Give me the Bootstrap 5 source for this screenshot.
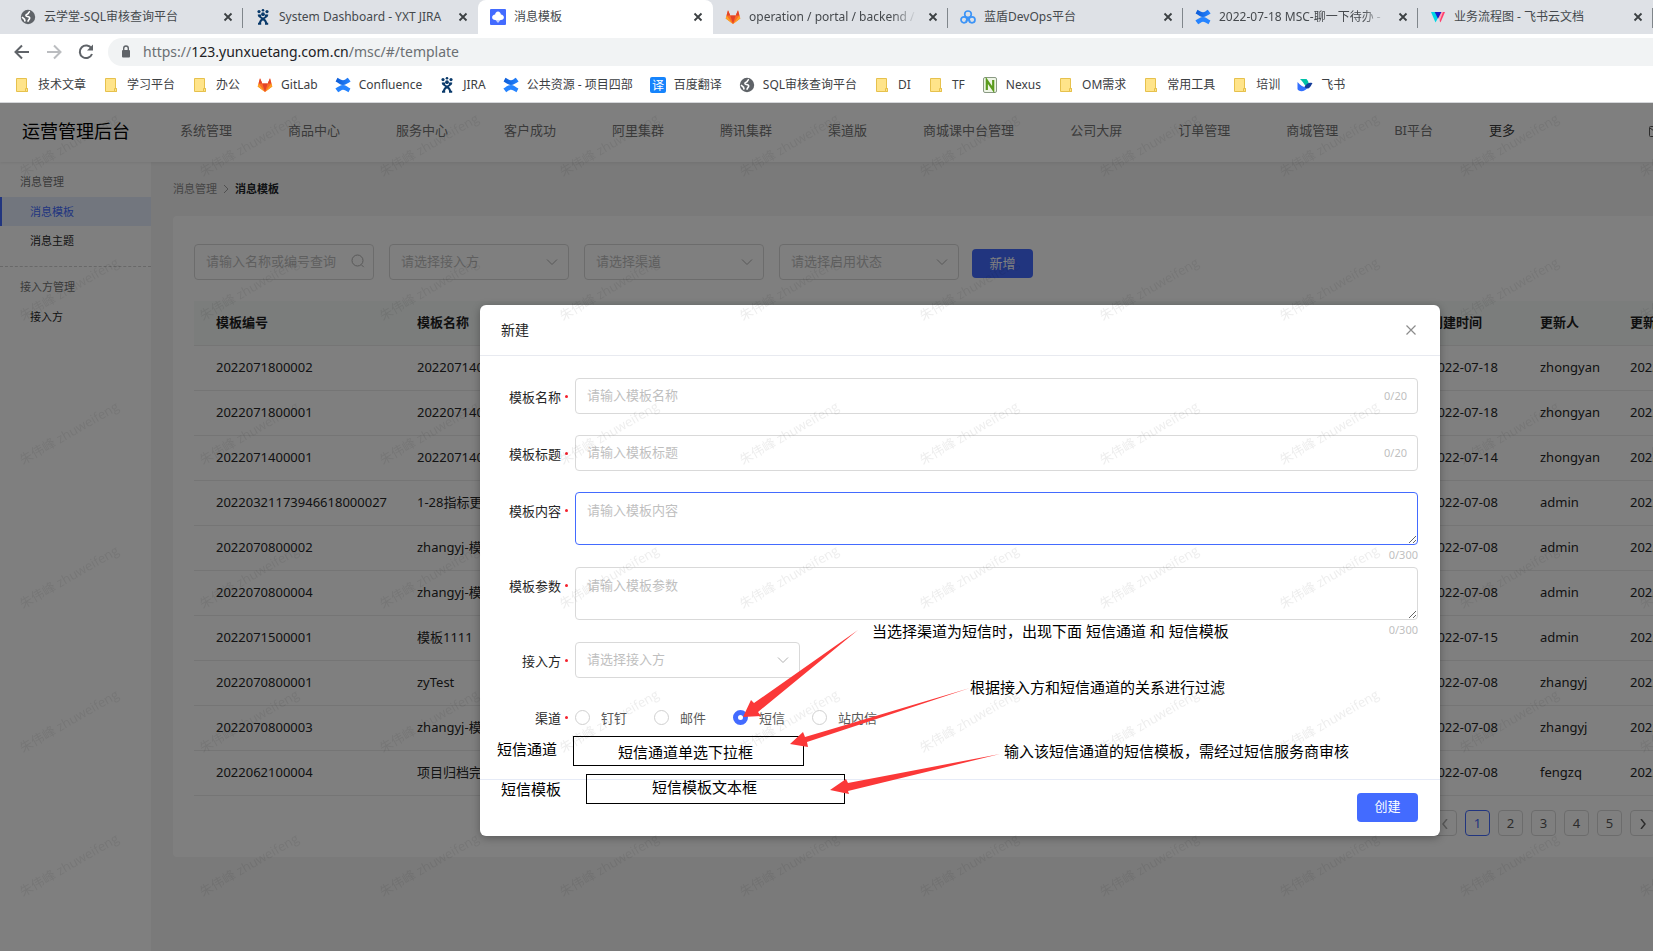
<!DOCTYPE html>
<html lang="zh-CN">
<head>
<meta charset="utf-8">
<meta name="viewport" content="width=device-width, initial-scale=1">
<title>消息模板</title>
<link href="https://cdn.jsdelivr.net/npm/bootstrap@5.3.0/dist/css/bootstrap.min.css" rel="stylesheet">
<style>
  :root { --brand: #436bff; }
  body { font-family: "Noto Sans", "Noto Sans CJK SC", sans-serif; font-size: 13px; line-height: 20px; color: #262626; background: #fff; }
  a { color: inherit; text-decoration: none; }
  button { font-family: inherit; }

  /* browser frame */
  .tab-strip { background: #dee1e6; height: 34px; padding-left: 8px; }
  .tab-item { flex: 0 0 235px; min-width: 0; height: 34px; padding: 0 7px 0 12px; font-size: 12px; color: #45494d; position: relative; }
  .tab-item.divided::after { content: ""; position: absolute; right: 0; top: 8px; height: 20px; width: 1px; background: #80868b; }
  .tab-item.current { background: #fff; border-radius: 8px 8px 0 0; }
  .tab-title { flex: 1; min-width: 0; overflow: hidden; white-space: nowrap; }
  .tab-title.fade-out { -webkit-mask-image: linear-gradient(90deg, #000 85%, transparent); mask-image: linear-gradient(90deg, #000 85%, transparent); }
  .tab-close { width: 16px; height: 16px; flex: none; color: #3c4043; }
  .toolbar { height: 36px; padding: 4px 0 4px 12px; gap: 12px; }
  .tool-btn { width: 20px; height: 20px; flex: none; color: #5f6368; }
  .tool-btn.off { color: #bbbdc0; }
  .omnibox { height: 28px; background: #f1f3f4; border-radius: 14px 0 0 14px; padding-left: 11px; gap: 10px; font-size: 14px; color: #6b6f73; }
  .omnibox b { color: #202124; font-weight: 400; }
  .bookmarks { height: 33px; padding: 0 0 2px 14px; gap: 17px; font-size: 12px; color: #3c4043; border-bottom: 1px solid #d5d7da; white-space: nowrap; }
  .bookmarks a { display: flex; align-items: center; gap: 8px; }
  .ico { width: 16px; height: 16px; flex: none; }

  /* admin application */
  .page-view { overflow: hidden; }
  .admin { min-width: 1920px; background: #fff; }
  .admin-head { height: 59px; padding: 0 257px 3px 22px; box-shadow: 0 1px 3px rgba(0,0,0,.08); position: relative; }
  .admin-title { width: 158px; font-size: 18px; color: #000; }
  .admin-nav { gap: 56px; color: #757575; padding-bottom: 2px; }
  .admin-nav .more { color: #3a3a3a; }
  .admin-side { flex: 0 0 151px; font-size: 11px; }
  .side-group { padding: 10px 0 5px 20px; color: #757575; }
  .side-link { display: block; height: 29px; line-height: 29px; padding-left: 28px; border-left: 2px solid transparent; color: #1f1f1f; }
  .side-link.active { background: #e4edfd; border-color: var(--brand); color: var(--brand); }
  .side-rule { margin: 11px 0 0; border-top: 1px dashed #d0d0d0; }
  .admin-main { background: #f4f4f4; padding: 0 20px 0 22px; }
  .crumbs { height: 54px; font-size: 11px; gap: 5px; color: #8c8c8c; }
  .panel { background: #fff; border-radius: 4px; padding: 28px 20px 21px 21px; }
  .field { font-size: 13px; line-height: 20px; height: 36px; border: 1px solid #d9d9d9; border-radius: 4px; padding: 6px 12px 8px 11px; color: #262626; background-color: #fff; }
  .field::placeholder { color: #bfbfbf; opacity: 1; }
  select.field { appearance: none; color: #bfbfbf; background-image: url("data:image/svg+xml,%3Csvg xmlns='http://www.w3.org/2000/svg' viewBox='0 0 12 12'%3E%3Cpath d='M1 3.5l5 5 5-5' fill='none' stroke='%23b0b0b0'/%3E%3C/svg%3E"); background-repeat: no-repeat; background-position: right 10px center; background-size: 12px; }
  .filters { gap: 15px; }
  .filters .filter { width: 180px; position: relative; }
  .filter svg { position: absolute; right: 9px; top: 10px; width: 14px; height: 14px; color: #b0b0b0; }
  .act { background: var(--brand); color: #fff; border: 0; border-radius: 4px; width: 61px; height: 29px; font-size: 13px; line-height: 20px; padding: 0 0 2px; }
  .act:hover { background: #3258e8; color: #fff; }
  .filters .act { margin: 3px 0 0 -2px; }
  .grid-table { table-layout: fixed; margin: 21px 0 14px; }
  .grid-table th, .grid-table td { height: 45px; padding: 0 0 1px 22px; vertical-align: middle; border-bottom: 1px solid #ebebeb; color: #262626; background: none; white-space: nowrap; overflow: hidden; box-shadow: none; }
  .grid-table th { height: 44px; background: #f6faf9; font-weight: 700; color: #1f1f1f; }
  .pager { gap: 8px; margin: 0 225px 0 0; }
  .pager .page-item .page-link { width: 25px; height: 26px; line-height: 24px; padding: 0; text-align: center; border: 1px solid #d9d9d9; border-radius: 4px; margin: 0; font-size: 13px; color: #595959; background: none; z-index: auto; }
  .pager .page-item.active .page-link { border-color: var(--brand); color: var(--brand); }
  .pager svg { width: 10px; height: 10px; }

  /* dialog */
  .shade { position: absolute; inset: 0; background: rgba(0,0,0,.5); padding-top: 202px; }
  .dialog-box { width: 50%; position: relative; }
  .dialog-box .modal-content { background: #fff; border: 0; border-radius: 6px; box-shadow: 0 2px 8px rgba(0,0,0,.3); color: #262626; }
  .dialog-box .modal-header { height: 51px; padding: 0 22px 0 21px; border-bottom: 1px solid #e8eaf0; }
  .dialog-box .modal-title { font-size: 14px; line-height: 20px; font-weight: 400; }
  .dialog-close { border: 0; background: none; padding: 0; width: 14px; height: 14px; color: #8c8c8c; line-height: 0; }
  .dialog-box .modal-body { padding: 22px 22px 43px 0; }
  .dialog-box .modal-footer { height: 57px; padding: 0 22px 2px; border-top: 1px solid #e6ebf7; }
  .form-line { display: flex; margin-bottom: 21px; }
  .form-line.long { margin-bottom: 22px; }
  .form-name { width: 95px; padding: 9px 14px 0 0; text-align: right; position: relative; flex: none; }
  .form-name::after { content: ""; position: absolute; right: 7px; top: 17px; width: 3px; height: 3px; border-radius: 50%; background: #f5222d; }
  .form-line textarea.field { height: 53px; padding-top: 7px; display: block; resize: vertical; }
  .form-line .party { width: 225px; }
  .field.on { border-color: var(--brand); }
  .tally { position: absolute; right: 11px; top: 8px; color: #bfbfbf; font-size: 11px; }
  .tally.under { right: 0; top: 53px; }
  .channel { width: 79px; gap: 11px; height: 37px; color: #595959; white-space: nowrap; }
  .channel .form-check-input { width: 15px; height: 15px; margin: 0; border: 1px solid #d0d0d0; background: #fff; float: none; flex: none; }
  .channel .form-check-input:checked { border: 5px solid var(--brand); background: #fff; }

  .stamp { position: absolute; inset: 0; width: 100%; height: 100%; pointer-events: none; }

  /* review notes laid over the dialog */
  .notes { position: absolute; inset: 0; font-size: 15px; line-height: 20px; color: #000; pointer-events: none; }
  .notes > * { position: absolute; white-space: nowrap; }
  .note-box { border: 1px solid #000; height: 30px; line-height: 30px; }
  .note-box.first { padding-left: 44px; }
  .note-box.second { line-height: 24px; padding-left: 65px; }
</style>
</head>
<body class="min-vh-100 d-flex flex-column overflow-hidden">
<svg width="0" height="0" class="position-absolute" aria-hidden="true">
  <defs>
    <linearGradient id="cfA" x1="0" x2="1"><stop offset="0" stop-color="#0a5ad6"/><stop offset="1" stop-color="#2684ff"/></linearGradient>
    <symbol id="globe" viewBox="0 0 16 16"><circle cx="8" cy="8" r="7.2" fill="#5f6368"/><path d="M10 2.500C8 3 9 4.700 7 5.300 5.200 5.900 5.800 7.400 7.300 7.500c1.800.1 2.700.8 2.300 2-.3 1.100-1.500 1.400-1.600 3.300M2 8l2.500 2.300.6 2.200" fill="none" stroke="#fff" stroke-width="1.600"/></symbol>
    <symbol id="jira" viewBox="0 0 16 16"><g fill="none" stroke="#0a3a6b" stroke-width="2"><path d="M3.500 5.500c.5 2.500 2 3 4.500 4.300 2 1 3.200 2.300 3.500 5.700M12.500 5.500c-.5 2.500-2 3-4.500 4.300-2 1-3.200 2.300-3.500 5.700M3 6.500h3M10 6.500h3M3 14.800h3.200M10 14.800h3.200"/></g><g fill="#0a3a6b"><circle cx="8" cy="5.200" r="1.900"/><circle cx="4" cy="2.600" r="1.600"/><circle cx="12" cy="2.600" r="1.600"/><circle cx="8" cy="1.300" r="1.300"/></g></symbol>
    <symbol id="gitlab" viewBox="0 0 16 16"><path d="M8 15L.7 9.500 3 1.200 5.300 6.500h5.400L13 1.200l2.300 8.300z" fill="#fc6d26"/><path d="M8 15L5.300 6.500h5.400z" fill="#e24329"/><path d="M8 15L.7 9.500l.9-3zM8 15l7.300-5.500-.9-3z" fill="#fca326"/><path d="M3 1.200l2.300 5.300H1.600zM13 1.200l-2.300 5.300h3.700z" fill="#e24329"/></symbol>
    <symbol id="conf" viewBox="0 0 16 16"><path d="M.6 4.500L2.500.8C5 2 6.300 3.300 8 3.300S11 1.800 12.800.8L15.600 4.500C13 6 10.500 8 8 8S3 5.800.6 4.500z" fill="url(#cfA)"/><path d="M15.400 11.500l-1.900 3.700C11 14 9.700 12.700 8 12.700s-3 1.500-4.800 2.500L.4 11.500C3 10 5.500 8 8 8s5 2.200 7.400 3.500z" fill="#2684ff"/></symbol>
    <symbol id="folder" viewBox="0 0 16 16"><path d="M2.500 1.500h10v10h1v3h-11z" fill="#ffe48a" stroke="#e6c14d"/><path d="M11.500 14.500v-3h2v3z" fill="#ffe48a" stroke="#e6c14d"/></symbol>
    <symbol id="cloud" viewBox="0 0 16 16"><rect width="16" height="16" rx="1" fill="#436bff"/><path d="M8 2.600c1.700 0 2.600 1.400 2.900 2.800 1.700.2 3 1.300 3 2.800 0 1.700-1.300 2.700-3 2.700H5.100c-1.700 0-3-1-3-2.700 0-1.500 1.300-2.600 3-2.800C5.400 4 6.300 2.600 8 2.600z" fill="#fff"/><path d="M5.500 11h5L8 14z" fill="#c6d2ff"/></symbol>
    <symbol id="devops" viewBox="0 0 16 16"><g fill="none" stroke="#3d94f6" stroke-width="1.700"><circle cx="8" cy="5.300" r="3.300"/><circle cx="4" cy="10.800" r="3"/><circle cx="12" cy="10.800" r="3"/><path d="M6.500 8l3.600 4.500M9.500 8l-3.600 4.500"/></g></symbol>
    <symbol id="docs" viewBox="0 0 16 16"><path d="M1 3h7l1 4-3.500 6.500z" fill="#00d6e6"/><path d="M15 3l-4.500 10.500L7 7l1-4z" fill="#ff3f6c"/><path d="M4.700 3h6.800L8 9.800z" fill="#1a1fc8"/><path d="M11.500 3L8 9.800l1.500 2.500L13 3z" fill="#fff" opacity=".55"/></symbol>
    <symbol id="fanyi" viewBox="0 0 16 16"><rect width="16" height="16" rx="2" fill="#1684fc"/><text x="2" y="12.500" font-size="12" fill="#fff" font-family="Noto Sans CJK SC, sans-serif">译</text></symbol>
    <symbol id="nexus" viewBox="0 0 16 16"><rect x="1.500" y=".5" width="13" height="15" rx="1.500" fill="#eef5e6" stroke="#8a9a84"/><path d="M4.800 13V3.300L11.200 12.700V3" fill="none" stroke="#5a9b1e" stroke-width="2.200"/></symbol>
    <symbol id="feishu" viewBox="0 0 16 16"><path d="M3 2h6.500c1.500 1.500 2 3 2.300 5L8.500 9C7 6.500 5 4 3 2z" fill="#00c2a8"/><path d="M.5 5c3 3.500 6 5.800 10 5.500-1.500 2.600-3.700 3.700-6 3.700C2.500 14.200.500 13 .5 12z" fill="#3370ff"/><path d="M7.500 9.800C10 6 12.500 5 15.500 6.200 14 8 13.500 11.500 10 11.500c-1 0-2-.7-2.500-1.700z" fill="#133c9a"/></symbol>
    <symbol id="x" viewBox="0 0 16 16"><path d="M4.500 4.500l7 7M11.500 4.500l-7 7" stroke="currentColor" stroke-width="1.800"/></symbol>
  </defs>
</svg>

<header>
  <nav class="tab-strip d-flex" aria-label="标签页">
    <div class="tab-item divided d-flex align-items-center gap-2"><svg class="ico"><use href="#globe"/></svg><span class="tab-title">云学堂-SQL审核查询平台</span><svg class="tab-close"><use href="#x"/></svg></div>
    <div class="tab-item d-flex align-items-center gap-2"><svg class="ico"><use href="#jira"/></svg><span class="tab-title">System Dashboard - YXT JIRA</span><svg class="tab-close"><use href="#x"/></svg></div>
    <div class="tab-item current d-flex align-items-center gap-2"><svg class="ico"><use href="#cloud"/></svg><span class="tab-title">消息模板</span><svg class="tab-close"><use href="#x"/></svg></div>
    <div class="tab-item divided d-flex align-items-center gap-2"><svg class="ico"><use href="#gitlab"/></svg><span class="tab-title fade-out">operation / portal / backend /</span><svg class="tab-close"><use href="#x"/></svg></div>
    <div class="tab-item divided d-flex align-items-center gap-2"><svg class="ico"><use href="#devops"/></svg><span class="tab-title">蓝盾DevOps平台</span><svg class="tab-close"><use href="#x"/></svg></div>
    <div class="tab-item divided d-flex align-items-center gap-2"><svg class="ico"><use href="#conf"/></svg><span class="tab-title fade-out">2022-07-18 MSC-聊一下待办 -</span><svg class="tab-close"><use href="#x"/></svg></div>
    <div class="tab-item divided d-flex align-items-center gap-2"><svg class="ico"><use href="#docs"/></svg><span class="tab-title">业务流程图 - 飞书云文档</span><svg class="tab-close"><use href="#x"/></svg></div>
  </nav>
  <div class="toolbar d-flex align-items-center">
    <svg class="tool-btn" viewBox="0 0 20 20" fill="none" stroke="currentColor" stroke-width="2"><path d="M17 10H4M10 3.500L3.500 10l6.500 6.500"/></svg>
    <svg class="tool-btn off" viewBox="0 0 20 20" fill="none" stroke="currentColor" stroke-width="2"><path d="M3 10h13M10 3.500l6.500 6.500-6.500 6.500"/></svg>
    <svg class="tool-btn" viewBox="0 0 20 20" fill="none" stroke="currentColor" stroke-width="2"><path d="M15.500 6.500A6.300 6.300 0 1 0 16 12"/><path d="M17 2.500V8.500H11z" fill="currentColor" stroke="none"/></svg>
    <div class="omnibox flex-grow-1 d-flex align-items-center">
      <svg width="14" height="16" viewBox="0 0 14 16"><rect x="3" y="6" width="8" height="7.500" rx="1" fill="#5f6368"/><path d="M4.700 6V4.300a2.300 2.300 0 0 1 4.600 0V6" fill="none" stroke="#5f6368" stroke-width="1.400"/></svg>
      <span>https://<b>123.yunxuetang.com.cn</b>/msc/#/template</span>
    </div>
  </div>
  <nav class="bookmarks d-flex align-items-center" aria-label="书签">
    <a href="#"><svg class="ico"><use href="#folder"/></svg>技术文章</a>
    <a href="#"><svg class="ico"><use href="#folder"/></svg>学习平台</a>
    <a href="#"><svg class="ico"><use href="#folder"/></svg>办公</a>
    <a href="#"><svg class="ico"><use href="#gitlab"/></svg>GitLab</a>
    <a href="#"><svg class="ico"><use href="#conf"/></svg>Confluence</a>
    <a href="#"><svg class="ico"><use href="#jira"/></svg>JIRA</a>
    <a href="#"><svg class="ico"><use href="#conf"/></svg>公共资源 - 项目四部</a>
    <a href="#"><svg class="ico"><use href="#fanyi"/></svg>百度翻译</a>
    <a href="#"><svg class="ico"><use href="#globe"/></svg>SQL审核查询平台</a>
    <a href="#"><svg class="ico"><use href="#folder"/></svg>DI</a>
    <a href="#"><svg class="ico"><use href="#folder"/></svg>TF</a>
    <a href="#"><svg class="ico"><use href="#nexus"/></svg>Nexus</a>
    <a href="#"><svg class="ico"><use href="#folder"/></svg>OM需求</a>
    <a href="#"><svg class="ico"><use href="#folder"/></svg>常用工具</a>
    <a href="#"><svg class="ico"><use href="#folder"/></svg>培训</a>
    <a href="#"><svg class="ico"><use href="#feishu"/></svg>飞书</a>
  </nav>
</header>

<div class="page-view flex-grow-1 d-flex">
  <div class="admin flex-grow-1 d-flex flex-column position-relative">
    <div class="admin-head d-flex align-items-center">
      <div class="admin-title">运营管理后台</div>
      <nav class="admin-nav d-flex">
        <a href="#">系统管理</a><a href="#">商品中心</a><a href="#">服务中心</a><a href="#">客户成功</a><a href="#">阿里集群</a><a href="#">腾讯集群</a><a href="#">渠道版</a><a href="#">商城课中台管理</a><a href="#">公司大屏</a><a href="#">订单管理</a><a href="#">商城管理</a><a href="#">BI平台</a><a href="#" class="more">更多</a>
      </nav>
      <svg class="ms-auto" width="14" height="12" viewBox="0 0 14 12" fill="none" stroke="#595959"><rect x=".5" y="1.500" width="13" height="10" rx="1"/><path d="M1 3l6 4.500L13 3"/></svg>
    </div>

    <div class="d-flex flex-grow-1">
      <aside class="admin-side">
        <div class="side-group">消息管理</div>
        <a class="side-link active" href="#">消息模板</a>
        <a class="side-link" href="#">消息主题</a>
        <div class="side-rule"></div>
        <div class="side-group">接入方管理</div>
        <a class="side-link" href="#">接入方</a>
      </aside>

      <main class="admin-main flex-grow-1">
        <div class="crumbs d-flex align-items-center">
          <a href="#">消息管理</a>
          <svg width="8" height="8" viewBox="0 0 8 8" fill="none" stroke="#a0a0a0"><path d="M2 0l4 4-4 4"/></svg>
          <span class="text-dark fw-semibold">消息模板</span>
        </div>
        <section class="panel">
          <form class="filters d-flex align-items-center">
            <div class="filter">
              <input class="field w-100" type="text" placeholder="请输入名称或编号查询" aria-label="名称或编号">
              <svg viewBox="0 0 14 14" fill="none" stroke="currentColor"><circle cx="6.500" cy="6.500" r="5.500"/><path d="M10.300 10.700l2.500 2.500"/></svg>
            </div>
            <select class="field filter" aria-label="接入方"><option>请选择接入方</option></select>
            <select class="field filter" aria-label="渠道"><option>请选择渠道</option></select>
            <select class="field filter" aria-label="启用状态"><option>请选择启用状态</option></select>
            <button type="button" class="btn act">新增</button>
          </form>
          <table class="table grid-table">
            <colgroup><col style="width:201px"><col><col style="width:110px"><col style="width:90px"><col style="width:272px"></colgroup>
            <thead><tr><th>模板编号</th><th>模板名称</th><th>创建时间</th><th>更新人</th><th>更新时间</th></tr></thead>
            <tbody>
              <tr><td>2022071800002</td><td>2022071400001</td><td>2022-07-18</td><td>zhongyan</td><td>2022-07-18</td></tr>
              <tr><td>2022071800001</td><td>2022071400001</td><td>2022-07-18</td><td>zhongyan</td><td>2022-07-18</td></tr>
              <tr><td>2022071400001</td><td>2022071400001</td><td>2022-07-14</td><td>zhongyan</td><td>2022-07-14</td></tr>
              <tr><td>20220321173946618000027</td><td>1-28指标更新</td><td>2022-07-08</td><td>admin</td><td>2022-07-08</td></tr>
              <tr><td>2022070800002</td><td>zhangyj-模板</td><td>2022-07-08</td><td>admin</td><td>2022-07-08</td></tr>
              <tr><td>2022070800004</td><td>zhangyj-模板</td><td>2022-07-08</td><td>admin</td><td>2022-07-08</td></tr>
              <tr><td>2022071500001</td><td>模板1111</td><td>2022-07-15</td><td>admin</td><td>2022-07-15</td></tr>
              <tr><td>2022070800001</td><td>zyTest</td><td>2022-07-08</td><td>zhangyj</td><td>2022-07-08</td></tr>
              <tr><td>2022070800003</td><td>zhangyj-模板</td><td>2022-07-08</td><td>zhangyj</td><td>2022-07-08</td></tr>
              <tr><td>2022062100004</td><td>项目归档完成</td><td>2022-07-08</td><td>fengzq</td><td>2022-07-08</td></tr>
            </tbody>
          </table>
          <ul class="pagination pager justify-content-end">
            <li class="page-item"><a class="page-link" href="#" aria-label="上一页"><svg viewBox="0 0 10 10" fill="none" stroke="#b0b0b0" stroke-width="1.500"><path d="M7 0L3 5l4 5"/></svg></a></li>
            <li class="page-item active"><a class="page-link" href="#">1</a></li>
            <li class="page-item"><a class="page-link" href="#">2</a></li>
            <li class="page-item"><a class="page-link" href="#">3</a></li>
            <li class="page-item"><a class="page-link" href="#">4</a></li>
            <li class="page-item"><a class="page-link" href="#">5</a></li>
            <li class="page-item"><a class="page-link" href="#" aria-label="下一页"><svg viewBox="0 0 10 10" fill="none" stroke="#595959" stroke-width="1.500"><path d="M3 0l4 5-4 5"/></svg></a></li>
          </ul>
        </section>
      </main>
    </div>

    <div class="shade d-flex justify-content-center align-items-start">
      <div class="dialog-box" role="dialog" aria-labelledby="dlgTitle">
        <form class="modal-content">
          <div class="modal-header">
            <h1 class="modal-title" id="dlgTitle">新建</h1>
            <button type="button" class="dialog-close" aria-label="关闭"><svg width="14" height="14" viewBox="0 0 14 14" stroke="currentColor" stroke-width="1.200"><path d="M2.500 2.500l9 9M11.500 2.500l-9 9"/></svg></button>
          </div>
          <div class="modal-body">
            <div class="form-line">
              <label class="form-name" for="fName">模板名称</label>
              <div class="flex-grow-1 position-relative"><input id="fName" class="field w-100" type="text" placeholder="请输入模板名称"><span class="tally">0/20</span></div>
            </div>
            <div class="form-line">
              <label class="form-name" for="fTitle">模板标题</label>
              <div class="flex-grow-1 position-relative"><input id="fTitle" class="field w-100" type="text" placeholder="请输入模板标题"><span class="tally">0/20</span></div>
            </div>
            <div class="form-line long">
              <label class="form-name" for="fBody">模板内容</label>
              <div class="flex-grow-1 position-relative"><textarea id="fBody" class="field on w-100" placeholder="请输入模板内容"></textarea><span class="tally under">0/300</span></div>
            </div>
            <div class="form-line long">
              <label class="form-name" for="fArgs">模板参数</label>
              <div class="flex-grow-1 position-relative"><textarea id="fArgs" class="field w-100" placeholder="请输入模板参数"></textarea><span class="tally under">0/300</span></div>
            </div>
            <div class="form-line">
              <label class="form-name" for="fParty">接入方</label>
              <select id="fParty" class="field party"><option>请选择接入方</option></select>
            </div>
            <div class="form-line mb-0" role="radiogroup" aria-labelledby="chName">
              <span class="form-name" id="chName">渠道</span>
              <label class="channel d-flex align-items-center"><input class="form-check-input" type="radio" name="ch">钉钉</label>
              <label class="channel d-flex align-items-center"><input class="form-check-input" type="radio" name="ch">邮件</label>
              <label class="channel d-flex align-items-center"><input class="form-check-input" type="radio" name="ch" checked>短信</label>
              <label class="channel d-flex align-items-center"><input class="form-check-input" type="radio" name="ch">站内信</label>
            </div>
          </div>
          <div class="modal-footer"><button type="button" class="btn act m-0">创建</button></div>
        </form>
      </div>
    </div>

    <svg class="stamp" aria-hidden="true">
      <defs><pattern id="wm" width="180" height="144" patternUnits="userSpaceOnUse"><text transform="translate(23 74) rotate(-30)" font-size="13" fill="#000" fill-opacity=".07" font-family="Open Sans, Noto Sans CJK SC, sans-serif">朱伟峰 zhuweifeng</text></pattern></defs>
      <rect width="100%" height="100%" fill="url(#wm)"/>
    </svg>

    <div class="shade bg-transparent pe-none d-flex justify-content-center align-items-start">
      <div class="dialog-box">
        <div class="notes">
          <svg width="960" height="533" viewBox="480 305 960 533" fill="#fb3838"><path d="M858 630L754 703 751 700 743 717 761 716 758 712z"/></svg>
          <span style="left:392px;top:316px">当选择渠道为短信时，出现下面 短信通道 和 短信模板</span>
          <span style="left:490px;top:372px">根据接入方和短信通道的关系进行过滤</span>
          <span style="left:524px;top:436px">输入该短信通道的短信模板，需经过短信服务商审核</span>
          <span style="left:17px;top:434px">短信通道</span>
          <span style="left:21px;top:474px">短信模板</span>
          <div class="note-box first" style="left:93px;top:431px;width:231px">短信通道单选下拉框</div>
          <div class="note-box second" style="left:106px;top:469px;width:259px">短信模板文本框</div>
          <svg width="960" height="533" viewBox="480 305 960 533" fill="#fb3838"><path d="M970 688L805 737 803 732 790 744 808 747 807 742zM1000 754L848 783 846 779 830 790 849 794 848 791z"/></svg>
        </div>
      </div>
    </div>
  </div>
</div>
<script src="https://cdn.jsdelivr.net/npm/bootstrap@5.3.0/dist/js/bootstrap.bundle.min.js"></script>
</body>
</html>
